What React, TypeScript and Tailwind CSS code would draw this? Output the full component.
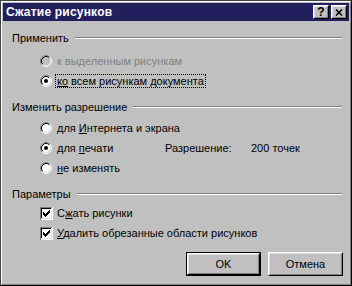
import type { ReactNode } from "react";

const font = { fontFamily: '"Liberation Sans", Arial, sans-serif' };

function Radio({ checked = false, disabled = false }: { checked?: boolean; disabled?: boolean }) {
  return (
    <svg width="12" height="12" viewBox="0 0 12 12" className="shrink-0">
      <circle cx="6" cy="6" r="4.5" fill={disabled ? "#c0c0c0" : "#ffffff"} />
      <path d="M2.11 9.89 A5.5 5.5 0 0 1 9.89 2.11" fill="none" stroke="#808080" />
      <path d="M9.89 2.11 A5.5 5.5 0 0 1 2.11 9.89" fill="none" stroke="#ffffff" />
      <path d="M2.82 9.18 A4.5 4.5 0 0 1 9.18 2.82" fill="none" stroke="#000000" />
      <path d="M9.18 2.82 A4.5 4.5 0 0 1 2.82 9.18" fill="none" stroke="#dfdfdf" />
      {checked && <circle cx="6" cy="6" r="2" fill="#000000" />}
    </svg>
  );
}

function Check() {
  return (
    <svg width="13" height="13" viewBox="0 0 13 13" className="shrink-0" shapeRendering="crispEdges">
      <rect x="0" y="0" width="13" height="13" fill="#ffffff" />
      <path d="M0 12.5 V0.5 H12.5" fill="none" stroke="#808080" />
      <path d="M1 11.5 V1.5 H11.5" fill="none" stroke="#000000" />
      <path d="M1.5 12 V11.5 H11.5 V1" fill="none" stroke="#dfdfdf" />
      <path d="M0.5 12.5 H12.5 V0" fill="none" stroke="#ffffff" />
      <path d="M3 5 V8 M4 6 V9 M5 7 V10 M6 6 V9 M7 5 V8 M8 4 V7 M9 3 V6" stroke="#000000" fill="none" />
    </svg>
  );
}

function GroupHeader({ title }: { title: string }) {
  return (
    <div className="flex h-[14px] items-center pl-[9px] pr-[7px]">
      <span className="leading-[14px]">{title}</span>
      <div className="ml-[6px] h-[2px] flex-1 border-t border-b border-t-[#808080] border-b-white" />
    </div>
  );
}

function Row({ children, className = "" }: { children: ReactNode; className?: string }) {
  return <div className={"flex h-[20px] items-center pl-[37px] " + className}>{children}</div>;
}

function TitleButton({ children }: { children: ReactNode }) {
  return (
    <div className="flex h-[14px] w-[16px] items-center justify-center border border-t-white border-l-white border-r-black border-b-black bg-[#c0c0c0]">
      <div className="flex h-full w-full items-center justify-center border border-t-[#dfdfdf] border-l-[#dfdfdf] border-r-[#808080] border-b-[#808080]">
        {children}
      </div>
    </div>
  );
}

function Button({ label, def = false }: { label: string; def?: boolean }) {
  const inner = (
    <div className="flex h-full w-full items-center justify-center border border-t-white border-l-white border-r-black border-b-black">
      <div className="flex h-full w-full items-center justify-center border border-t-[#dfdfdf] border-l-[#dfdfdf] border-r-[#808080] border-b-[#808080]">
        {label}
      </div>
    </div>
  );
  return (
    <div className={"h-[24px] w-[75px] " + (def ? "border border-black" : "")}>{inner}</div>
  );
}

export default function App() {
  return (
    <div style={font} className="h-[286px] w-[352px] border border-t-[#404040] border-l-[#404040] border-r-black border-b-black bg-[#c0c0c0] text-[11px] text-black">
      <div className="flex h-full flex-col border border-t-white border-l-white border-r-[#808080] border-b-[#808080] p-[1px]">
        <div className="flex h-[18px] items-center bg-[#231f5e] pl-[3px] pr-[2px]">
          <span className="flex-1 text-[12px] font-bold leading-[18px] tracking-[0.2px] text-white">Сжатие рисунков</span>
          <div className="flex gap-[2px]">
            <TitleButton>
              <span className="text-[12px] font-bold leading-none">?</span>
            </TitleButton>
            <TitleButton>
              <svg width="8" height="7" viewBox="0 0 8 7">
                <path d="M1 0.5 L7 6.5 M7 0.5 L1 6.5" stroke="#000" strokeWidth="1.6" />
              </svg>
            </TitleButton>
          </div>
        </div>

        <div className="flex flex-col pt-[10px]">
          <GroupHeader title="Применить" />
          <Row className="mt-[6px]">
            <Radio disabled />
            <span className="ml-[5px] text-[#808080]">к выделенным рисункам</span>
          </Row>
          <Row>
            <Radio checked />
            <span className="ml-[3px] border border-dotted border-black px-[1px] leading-[12px]">
              <u>ко</u> всем рисункам документа
            </span>
          </Row>

          <div className="mt-[9px]">
            <GroupHeader title="Изменить разрешение" />
          </div>
          <Row className="mt-[4px]">
            <Radio />
            <span className="ml-[5px]">
              для <u>И</u>нтернета и экрана
            </span>
          </Row>
          <Row>
            <div className="flex w-[125px] items-center">
              <Radio checked />
              <span className="ml-[5px]">
                для <u>п</u>ечати
              </span>
            </div>
            <span className="w-[86px]">Разрешение:</span>
            <span>200 точек</span>
          </Row>
          <Row>
            <Radio />
            <span className="ml-[5px]">
              <u>н</u>е изменять
            </span>
          </Row>

          <div className="mt-[9px]">
            <GroupHeader title="Параметры" />
          </div>
          <Row className="mt-[2px]">
            <Check />
            <span className="ml-[4px]">
              С<u>ж</u>ать рисунки
            </span>
          </Row>
          <Row>
            <Check />
            <span className="ml-[4px]">
              <u>У</u>далить обрезанные области рисунков
            </span>
          </Row>

          <div className="mt-[9px] flex justify-end gap-[7px] pr-[6px]">
            <Button label="OK" def />
            <Button label="Отмена" />
          </div>
        </div>
      </div>
    </div>
  );
}
